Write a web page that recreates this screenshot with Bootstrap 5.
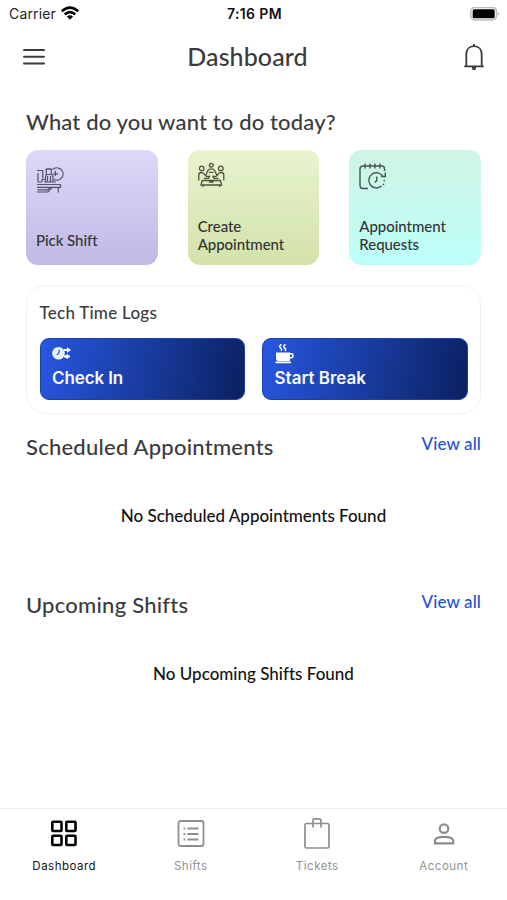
<!DOCTYPE html>
<html lang="en">
<head>
<meta charset="utf-8">
<meta name="viewport" content="width=device-width, initial-scale=1">
<title>Dashboard</title>
<link href="https://cdn.jsdelivr.net/npm/bootstrap@5.3.0/dist/css/bootstrap.min.css" rel="stylesheet">
<style>
body{font-family:Lato,"Liberation Sans",sans-serif;color:#3b3b3d;background:#fff;width:507px;height:900px;overflow:hidden;font-weight:500;font-variant-ligatures:none}
svg{display:block;flex:none}
.ui{font-family:Inter,"Liberation Sans",sans-serif}
.status{height:28px;padding:0 7px 0 9px;font-size:14px;line-height:28px;color:#222;font-weight:400}
.status>*{flex:1}
.carrier{letter-spacing:.15px}
.clock{font-size:14px;font-weight:600;letter-spacing:.4px;color:#111}
.topbar{height:58px;padding:0 22px}
.page-title{font-size:25px;line-height:30px;letter-spacing:.1px;padding:0 14px 2px 0}
.main{padding:22px 26px 0}
.ask{font-size:22px;line-height:28px;letter-spacing:.15px}
.tiles{gap:30px;margin-top:14px}
.tile{flex:1;height:115px;border-radius:12px;padding:11px 10px 12px;font-size:15px;line-height:17.5px;letter-spacing:-.05px;color:#333}
.tile-a{background:linear-gradient(#dcd8f7,#c1b9e6);padding-bottom:16px}
.tile-b{background:linear-gradient(#e7f4cf,#d2e2aa)}
.tile-c{background:linear-gradient(#cff4e4,#bcfffa)}
.logs{margin-top:20px;height:129px;border:1px solid #f1f1f3;border-radius:20px;padding:15px 12.5px 0}
.logs-title{font-size:17px;line-height:24px;letter-spacing:.25px}
.log-row{gap:17px;margin-top:13px}
.log-btn{flex:1;height:62px;border-radius:9px;padding:5px 12px 0 11.5px;color:#f7f9ff;background:linear-gradient(100deg,#2857e0,#0a2160);font-size:17px;font-weight:600;line-height:22px;border:1px solid #1c3fa8}
.log-btn div{margin-top:3px}
.check{letter-spacing:-.1px}
.sec{height:158px;padding-top:19px}
.sec-title{font-size:22px;line-height:28px;letter-spacing:.24px}
.more{font-size:17px;line-height:22px;letter-spacing:.12px;color:#2452d0;text-decoration:none}
.empty{font-size:17px;line-height:24px;margin-top:43px;color:#111}
.tabs{height:92px;border-top:1px solid #efefef;font-size:11.5px;letter-spacing:.5px;color:#929292;font-weight:400;padding-left:1px}
.tabs a{flex:1;color:inherit;text-decoration:none;padding-top:8px}
.tabs .on{color:#111}
.tabs span{line-height:16px;margin-top:9px}
</style>
</head>
<body class="d-flex flex-column">
<div class="status ui d-flex align-items-center">
  <div class="d-flex align-items-center gap-1"><span class="carrier">Carrier</span>
    <svg width="20" height="16" viewBox="0 0 20 16" fill="none" stroke="#000" stroke-width="2.5"><path d="M1.8 5.2Q10-2 18.2 5.2M4.7 8.4Q10 3.8 15.3 8.4"/><path d="M6.9 10.5Q10 7.8 13.1 10.5L10 13.8Z" fill="#000" stroke="none"/></svg>
  </div>
  <div class="clock text-center">7:16 PM</div>
  <div class="d-flex justify-content-end"><svg width="30" height="14" viewBox="0 0 30 14"><rect x=".9" y=".5" width="25.6" height="12.4" rx="3.8" fill="#fff" stroke="#bdbdbd" stroke-width="1.5"/><rect x="2.700" y="2.300" width="22" height="8.900" rx="1.500" fill="#000"/><path d="M28 4.600Q29.800 6.700 28 8.800Z" fill="#aaa"/></svg></div>
</div>
<header class="topbar d-flex align-items-center justify-content-between">
  <svg width="24" height="20" viewBox="0 0 24 20" stroke="#3b3b3d" stroke-width="2" stroke-linecap="round"><path d="M2 3H22M2 9.800H22M2 16.500H22"/></svg>
  <div class="page-title">Dashboard</div>
  <svg width="22" height="28" viewBox="0 0 22 28" fill="none" stroke="#3b3b3d" stroke-width="1.800"><path d="M3.300 23V11.500C3.300 6.400 6.500 3.200 11 3.200S18.700 6.400 18.700 11.500V23M1.300 23.300H20.700M11 1V3.500"/><path d="M8.800 24H13.200L12.400 27H9.600Z" fill="#3b3b3d" stroke="none"/></svg>
</header>
<main class="main flex-grow-1">
  <div class="ask">What do you want to do today?</div>
  <div class="tiles d-flex">
    <div class="tile tile-a d-flex flex-column justify-content-between">
      <svg width="28" height="32" viewBox="0 0 28 32" fill="none" stroke="#55516a" stroke-width="1.200"><path d="M1 9.500H6.800V17.500M2 12V21H6M6 21V18.500H9.500M9.500 21V15.500Q9.500 13.500 11.500 13.500H14.500Q17 13.500 17 16V21"/><rect x="10.300" y="8" width="4.900" height="5.500" rx="1"/><path d="M9.500 8H16M11.500 15V21M14.500 15V21M8 21H20"/><path d="M16.500 8.600A6.200 6.200 0 1 1 18 18.500"/><path d="M19.300 9.800V15M16.800 12.800H22"/><path d="M1 23.500H24.500V26.300H1M1.500 28.800H11.500L14 26.500M1 31H12L16 26.500M22.300 26.500V31.500"/></svg>
      <span>Pick Shift</span>
    </div>
    <div class="tile tile-b d-flex flex-column justify-content-between">
      <svg width="28" height="28" viewBox="0 0 28 28" fill="none" stroke="#4a5440" stroke-width="1.300"><circle cx="3.700" cy="7.400" r="2.300"/><circle cx="22.800" cy="7.400" r="2.300"/><circle cx="13.300" cy="4.300" r="1.900"/><path d="M7.800 14L10 9.500Q10.800 7.800 13.300 7.800T16.600 9.500L18.800 14M11 11.300H15.500M.8 19.500V14Q.8 11.500 3.500 11.500Q5 11.500 6 13L8.500 15.300H11.500L10.500 17.300H6M25.800 19.500V14Q25.800 11.500 23 11.500Q21.500 11.500 20.500 13L18 15.300H15L16 17.300H20.500M3 24L4.300 19.500H22.300L23.600 24ZM5 24V26M21.700 24V26M11 21H15.500"/></svg>
      <span>Create<br>Appointment</span>
    </div>
    <div class="tile tile-c d-flex flex-column justify-content-between">
      <svg width="28" height="30" viewBox="0 0 28 30" fill="none" stroke="#45544f" stroke-width="1.400"><path d="M9 27.500H4Q1 27.500 1 24.500V8Q1 5 4 5H23Q25.500 5 25.500 8V10M6 2.500V7.500M11 2.500V7.500M16 2.500V7.500M21 2.500V7.500"/><path d="M24 15.500A7.600 7.600 0 1 0 22.500 25M26.300 11.500V15.500H22M17.800 15.500V19.500L15.800 21.500"/><path d="M25.200 19V20.500M24.500 22.800V24.300"/></svg>
      <span>Appointment<br>Requests</span>
    </div>
  </div>
  <section class="logs">
    <div class="logs-title">Tech Time Logs</div>
    <div class="log-row d-flex">
      <div class="log-btn ui">
        <svg width="20" height="20" viewBox="0 0 20 20"><circle cx="6.500" cy="9.300" r="6.300" fill="#e9efff"/><path d="M7.500 5.800L6.500 9.500L4.700 11" fill="none" stroke="#2a55d2" stroke-width="1.200"/><path d="M12 6H18M12 12.500H18" stroke="#fff" stroke-width="2"/><path d="M15 3.200L19 6L15 8.800ZM16 9.700L12 12.500L16 15.300Z" fill="#fff"/></svg>
        <div class="check">Check In</div>
      </div>
      <div class="log-btn ui">
        <svg width="20" height="20" viewBox="0 0 20 20" fill="#fff"><path d="M1 8.500H15V15.500Q15 17 14 17H3.500Q1 17 1 14.500ZM.5 17.500H16V19.300H.5Z"/><path d="M14.500 9.800H16.200Q18 9.800 18 11.800T16 13.800H14.500M6.500 .3Q3.500 2.300 5.500 3.800T6 6.800M10.500 .3Q7.500 2.300 9.500 3.800T10 6.800" fill="none" stroke="#fff" stroke-width="1.500"/></svg>
        <div>Start Break</div>
      </div>
    </div>
  </section>
  <section class="sec">
    <div class="d-flex justify-content-between"><div class="sec-title">Scheduled Appointments</div><a class="more" href="#">View all</a></div>
    <div class="empty text-center">No Scheduled Appointments Found</div>
  </section>
  <section class="sec">
    <div class="d-flex justify-content-between"><div class="sec-title">Upcoming Shifts</div><a class="more" href="#">View all</a></div>
    <div class="empty text-center">No Upcoming Shifts Found</div>
  </section>
</main>
<nav class="tabs ui d-flex">
  <a class="on d-flex flex-column align-items-center" href="#"><svg width="30" height="32" viewBox="0 0 30 32" fill="none" stroke="#000" stroke-width="2.600"><rect x="3.300" y="4.800" width="9.200" height="9.200" rx=".8"/><rect x="17.300" y="4.800" width="9.200" height="9.200" rx=".8"/><rect x="3.300" y="18.800" width="9.200" height="9.200" rx=".8"/><rect x="17.300" y="18.800" width="9.200" height="9.200" rx=".8"/></svg><span>Dashboard</span></a>
  <a class="d-flex flex-column align-items-center" href="#"><svg width="30" height="32" viewBox="0 0 30 32" fill="none" stroke="#8e8e8e" stroke-width="1.800"><rect x="2.500" y="4" width="25" height="25" rx="2"/><path d="M11.500 11.500H22.500M11.500 17H22.500M11.500 22.500H22.500M7.500 11.500H9.300M7.500 17H9.300M7.500 22.500H9.300"/></svg><span>Shifts</span></a>
  <a class="d-flex flex-column align-items-center" href="#"><svg width="30" height="32" viewBox="0 0 30 32" fill="none" stroke="#8e8e8e" stroke-width="1.700"><rect x="3" y="6.500" width="24" height="24.500" rx="1.500"/><path d="M11 10.500V3.500Q11 1.800 12.700 1.800H17.300Q19 1.800 19 3.500V10.500"/></svg><span>Tickets</span></a>
  <a class="d-flex flex-column align-items-center" href="#"><svg width="30" height="32" viewBox="0 0 30 32" fill="none" stroke="#8e8e8e" stroke-width="2.200"><circle cx="15" cy="11.600" r="4.300"/><path d="M5.900 26.300V24Q5.900 19.800 15 19.800T24.300 24V26.300Z"/></svg><span>Account</span></a>
</nav>
<script src="https://cdn.jsdelivr.net/npm/bootstrap@5.3.0/dist/js/bootstrap.bundle.min.js"></script>
</body>
</html>
